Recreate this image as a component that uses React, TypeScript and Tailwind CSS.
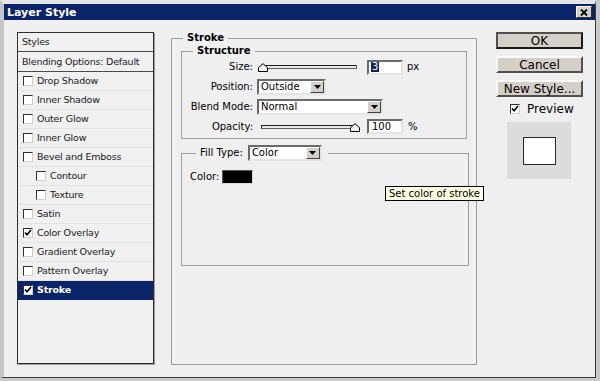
import React from "react";

const styleRows = [
  { label: "Drop Shadow" },
  { label: "Inner Shadow" },
  { label: "Outer Glow" },
  { label: "Inner Glow" },
  { label: "Bevel and Emboss" },
  { label: "Contour", indent: true },
  { label: "Texture", indent: true },
  { label: "Satin" },
  { label: "Color Overlay", checked: true },
  { label: "Gradient Overlay" },
  { label: "Pattern Overlay" },
  { label: "Stroke", checked: true, selected: true },
];

function Check({ checked }: { checked?: boolean }) {
  return (
    <span className="w-[10px] h-[10px] shrink-0 bg-white border border-t-[#303030] border-l-[#303030] border-r-[#cfcfcf] border-b-[#cfcfcf] flex items-center justify-center">
      {checked && (
        <svg width="8" height="8" viewBox="0 0 8 8">
          <path d="M1 3.5 L3 5.8 L7 1" stroke="#000" strokeWidth="1.6" fill="none" />
        </svg>
      )}
    </span>
  );
}

function Thumb() {
  return (
    <svg width="10" height="9" viewBox="0 0 10 9">
      <path d="M0.5 8.5 V4.5 L5 0.7 L9.5 4.5 V8.5 Z" fill="#f4f4f4" stroke="#000" strokeWidth="1" />
    </svg>
  );
}

function Slider({ right }: { right?: boolean }) {
  return (
    <div className="relative w-[104px] h-[14px] flex items-center">
      <div className="mx-[4px] flex-1 h-[4px] bg-[#e8e8e8] border border-t-[#202020] border-l-[#202020] border-b-[#606060] border-r-[#606060]" />
      <div className={"absolute top-[3px] " + (right ? "left-[93px]" : "left-[1px]")}>
        <Thumb />
      </div>
    </div>
  );
}

function Sunken({ className, children }: { className?: string; children?: React.ReactNode }) {
  return (
    <div className={"bg-white border-2 border-t-[#6a6a6a] border-l-[#6a6a6a] border-r-[#e4e4e4] border-b-[#e4e4e4] flex items-center " + (className ?? "")}>
      {children}
    </div>
  );
}

function Select({ value, width }: { value: string; width: string }) {
  return (
    <Sunken className={width + " h-[16px]"}>
      <span className="flex-1 pl-[2px] text-[10px] leading-none text-black">{value}</span>
      <span className="w-[14px] h-full bg-[#d4d0c8] border border-t-white border-l-white border-r-[#404040] border-b-[#404040] flex items-center justify-center">
        <svg width="7" height="4" viewBox="0 0 7 4">
          <path d="M0 0 H7 L3.5 4 Z" fill="#000" />
        </svg>
      </span>
    </Sunken>
  );
}

function Button({ label, primary }: { label: string; primary?: boolean }) {
  return (
    <button
      className={
        "w-[87px] h-[17px] bg-[#d4d0c8] text-[12px] leading-none text-black flex items-center justify-center " +
        (primary
          ? "border-2 border-t-[#505050] border-l-[#505050] border-r-[#1a1a1a] border-b-[#1a1a1a]"
          : "border-2 border-t-white border-l-white border-r-[#505050] border-b-[#505050]")
      }
    >
      {label}
    </button>
  );
}

export default function App() {
  return (
    <div className="w-[600px] h-[381px] bg-[#c9c9c9] font-['DejaVu_Sans',sans-serif] text-black overflow-hidden">
      <div className="w-[596px] h-[378px] bg-[#efefef] border-l-[4px] border-l-[#c6c6c6] border-t-[4px] border-t-[#e6e6e6] border-r border-r-[#3a3a3a] border-b border-b-[#3a3a3a] flex flex-col">
        {/* Title bar */}
        <div className="h-[16px] bg-[#0a246a] flex items-center justify-between pl-[3px] pr-[3px]">
          <span className="text-white font-bold text-[11px] leading-none">Layer Style</span>
          <span className="w-[16px] h-[12px] bg-[#d4d0c8] border border-t-white border-l-white border-r-[#303030] border-b-[#303030] flex items-center justify-center">
            <svg width="8" height="7" viewBox="0 0 8 7">
              <path d="M1 0.5 L7 6.5 M7 0.5 L1 6.5" stroke="#000" strokeWidth="1.8" />
            </svg>
          </span>
        </div>

        <div className="flex pl-[13px] pt-[12px]">
          {/* Styles list */}
          <div className="w-[137px] h-[332px] border border-[#2e2e2e] shadow-[1px_1px_0_#9a9a9a] bg-[#f0f0f0] flex flex-col text-[9.5px] tracking-[-0.2px] leading-none text-[#1a1a1a]">
            <div className="h-[19px] flex items-center pl-[4px] border-b border-[#4a4a4a]">Styles</div>
            <div className="h-[20px] flex items-center pl-[4px] border-b border-[#4a4a4a]">Blending Options: Default</div>
            {styleRows.map((r) => (
              <div
                key={r.label}
                className={
                  "h-[19px] flex items-center gap-[4px] border-b " +
                  (r.indent ? "pl-[18px] " : "pl-[5px] ") +
                  (r.selected ? "bg-[#0a246a] text-white font-bold border-[#0a246a]" : "border-[#e2e2e2]")
                }
              >
                <Check checked={r.checked} />
                <span>{r.label}</span>
              </div>
            ))}
          </div>

          {/* Stroke group */}
          <fieldset className="ml-[17px] mt-[0px] w-[306px] h-[333px] border border-[#9c9c9c] pl-[9px]">
            <legend className="ml-[2px] px-[4px] text-[10px] font-bold leading-[12px]">Stroke</legend>

            <fieldset className="mt-[1px] w-[286px] h-[94px] border border-[#9c9c9c]">
              <legend className="ml-[11px] px-[4px] text-[10px] font-bold leading-[12px]">Structure</legend>
              <div className="flex flex-col text-[10px] leading-none">
                <div className="h-[20px] flex items-center">
                  <span className="w-[71px] text-right">Size:</span>
                  <span className="ml-[4px]">
                    <Slider />
                  </span>
                  <Sunken className="ml-[6px] w-[36px] h-[15px]">
                    <span className="ml-[2px] bg-[#0a246a] text-white px-[1px] leading-[10px]">3</span>
                  </Sunken>
                  <span className="ml-[4px]">px</span>
                </div>
                <div className="h-[20px] flex items-center">
                  <span className="w-[71px] text-right">Position:</span>
                  <span className="ml-[4px]">
                    <Select value="Outside" width="w-[69px]" />
                  </span>
                </div>
                <div className="h-[20px] flex items-center">
                  <span className="w-[71px] text-right">Blend Mode:</span>
                  <span className="ml-[4px]">
                    <Select value="Normal" width="w-[126px]" />
                  </span>
                </div>
                <div className="h-[19px] flex items-center">
                  <span className="w-[71px] text-right">Opacity:</span>
                  <span className="ml-[4px]">
                    <Slider right />
                  </span>
                  <Sunken className="ml-[6px] w-[36px] h-[15px]">
                    <span className="ml-[3px]">100</span>
                  </Sunken>
                  <span className="ml-[5px]">%</span>
                </div>
              </div>
            </fieldset>

            <fieldset className="mt-[6px] w-[288px] h-[121px] border border-[#9c9c9c] pl-[8px]">
              <legend className="ml-[6px] px-[4px] pr-[6px] flex items-center gap-[5px] text-[10px] leading-none">
                <span>Fill Type:</span>
                <Select value="Color" width="w-[74px]" />
              </legend>
              <div className="mt-[9px] flex items-center text-[10px] leading-none">
                <span>Color:</span>
                <span className="ml-[3px] w-[31px] h-[14px] bg-black border border-t-[#555] border-l-[#555] border-r-[#ddd] border-b-[#ddd]" />
              </div>
            </fieldset>
          </fieldset>

          {/* Right column */}
          <div className="ml-[19px] flex flex-col">
            <div className="flex flex-col gap-[7px]">
              <Button label="OK" primary />
              <Button label="Cancel" />
              <Button label="New Style..." />
            </div>
            <div className="mt-[6px] ml-[14px] flex items-center gap-[7px] text-[12px] leading-none">
              <Check checked />
              <span>Preview</span>
            </div>
            <div className="mt-[7px] ml-[11px] w-[64px] h-[57px] bg-[#dcdcdc] flex items-start justify-center pt-[15px]">
              <div className="w-[33px] h-[28px] bg-white border border-[#2a2a2a]" />
            </div>
          </div>
        </div>
      </div>

      {/* Tooltip */}
      <div className="absolute left-[385px] top-[186px] h-[15px] px-[3px] bg-[#ffffe1] border border-black text-[10px] leading-none flex items-center">
        Set color of stroke
      </div>
    </div>
  );
}
